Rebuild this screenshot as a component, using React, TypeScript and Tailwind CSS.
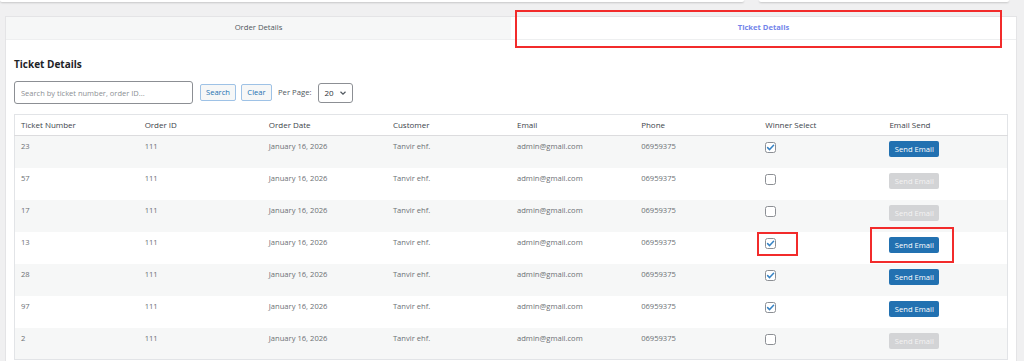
import React from "react";

interface Ticket {
  number: string;
  winner: boolean;
}

const tickets: Ticket[] = [
  { number: "23", winner: true },
  { number: "57", winner: false },
  { number: "17", winner: false },
  { number: "13", winner: true },
  { number: "28", winner: true },
  { number: "97", winner: true },
  { number: "2", winner: false },
];

const headers = [
  "Ticket Number",
  "Order ID",
  "Order Date",
  "Customer",
  "Email",
  "Phone",
  "Winner Select",
  "Email Send",
];

const Checkbox = ({ checked }: { checked: boolean }) => (
  <svg width="11" height="11" viewBox="0 0 11 11" className="block">
    <rect x="0.5" y="0.5" width="10" height="10" rx="2" fill="#fff" stroke="#8c8f94" />
    {checked && (
      <path d="M2.6 5.6 L4.6 7.6 L8.6 3.2" fill="none" stroke="#3582c4" strokeWidth="1.5" strokeLinecap="round" strokeLinejoin="round" />
    )}
  </svg>
);

const cell = "px-[6px] pt-[5px] align-top text-[7.6px] leading-[10px] text-[#6c7075]";

const TicketTable = () => {
  return (
    <table className="w-full table-fixed border border-[#e2e4e7] border-collapse">
      <thead>
        <tr className="h-[21px] bg-white border-b border-[#dcdcde]">
          {headers.map((h) => (
            <th key={h} className="text-left font-normal text-[8px] leading-[10px] text-[#3c434a] px-[6px] align-middle">
              {h}
            </th>
          ))}
        </tr>
      </thead>
      <tbody>
        {tickets.map((t, i) => (
          <tr key={i} className={i % 2 === 0 ? "h-8 bg-[#f6f7f7]" : "h-8 bg-white"}>
            <td className={cell}>{t.number}</td>
            <td className={cell}>111</td>
            <td className={cell}>January 16, 2026</td>
            <td className={cell}>Tanvir ehf.</td>
            <td className={cell}>admin@gmail.com</td>
            <td className={cell}>06959375</td>
            <td className="px-[6px] pt-[6px] align-top">
              <Checkbox checked={t.winner} />
            </td>
            <td className="px-[6px] pt-[5px] align-top">
              <button
                className={
                  t.winner
                    ? "block w-[50px] h-[16px] rounded-[2px] bg-[#2271b1] text-white text-[7.6px] leading-[16px]"
                    : "block w-[50px] h-[16px] rounded-[2px] bg-[#d3d4d6] text-[#f3f3f3] text-[7.6px] leading-[16px]"
                }
              >
                Send Email
              </button>
            </td>
          </tr>
        ))}
      </tbody>
    </table>
  );
};

export default function App() {
  return (
    <div
      className="relative w-[1024px] h-[361px] overflow-hidden bg-[#f0f0f1]"
      style={{ fontFamily: '"Open Sans", "Noto Sans", sans-serif' }}
    >
      {/* cards above, only their bottom edges are visible */}
      <div className="flex h-[2px]">
        <div className="w-[744px] bg-white rounded-b-[4px] shadow-[0_1px_2px_rgba(0,0,0,0.18)]" />
        <div className="ml-[15px] w-[250px] bg-white rounded-b-[4px] shadow-[0_1px_2px_rgba(0,0,0,0.18)]" />
      </div>

      <div className="mt-[14px] ml-[5px] mr-[7px] bg-white border border-[#e4e4e6] h-[400px]">
        <div className="grid grid-cols-2 h-[23px] border-b border-[#eeeff0]">
          <div className="flex items-center justify-center bg-[#f6f7f7] text-[7.7px] text-[#50575e]">
            Order Details
          </div>
          <div className="flex items-center justify-center bg-white text-[7.6px] font-bold text-[#7385ea]">
            Ticket Details
          </div>
        </div>

        <div className="px-[8px]">
          <h2 className="pt-[17px] text-[10px] leading-[14px] font-bold text-[#1d2327]">Ticket Details</h2>

          <div className="mt-[10px] flex items-center h-[23px]">
            <input
              className="w-[179px] h-[23px] rounded-[3px] border border-[#8c8f94] px-[6px] text-[7.5px] placeholder:text-[#8c8f94] outline-none"
              placeholder="Search by ticket number, order ID..."
            />
            <button className="ml-[7px] w-[36px] h-[17px] rounded-[2px] border border-[#9ec2e6] bg-[#f6f7f7] text-[7.6px] text-[#2271b1]">
              Search
            </button>
            <button className="ml-[5px] w-[31px] h-[17px] rounded-[2px] border border-[#9ec2e6] bg-[#f6f7f7] text-[7.6px] text-[#2271b1]">
              Clear
            </button>
            <span className="ml-[6px] text-[7.7px] text-[#50575e]">Per Page:</span>
            <div className="ml-[6px] w-[35px] h-[20px] rounded-[3px] border border-[#8c8f94] flex items-center justify-between pl-[6px] pr-[5px] text-[8px] text-[#2c3338]">
              <span>20</span>
              <svg width="8" height="8" viewBox="0 0 8 8">
                <path d="M1.5 2.8 L4 5.2 L6.5 2.8" fill="none" stroke="#50575e" strokeWidth="1.2" />
              </svg>
            </div>
          </div>

          <div className="mt-[10px]">
            <TicketTable />
          </div>
        </div>
      </div>

      {/* red annotation boxes */}
      <div className="absolute left-[515px] top-[10px] w-[487px] h-[38px] border-2 border-[#f22b2b]" />
      <div className="absolute left-[757px] top-[232px] w-[41px] h-[24px] border-2 border-[#f22b2b]" />
      <div className="absolute left-[870px] top-[227px] w-[84px] h-[36px] border-2 border-[#f22b2b]" />
    </div>
  );
}
